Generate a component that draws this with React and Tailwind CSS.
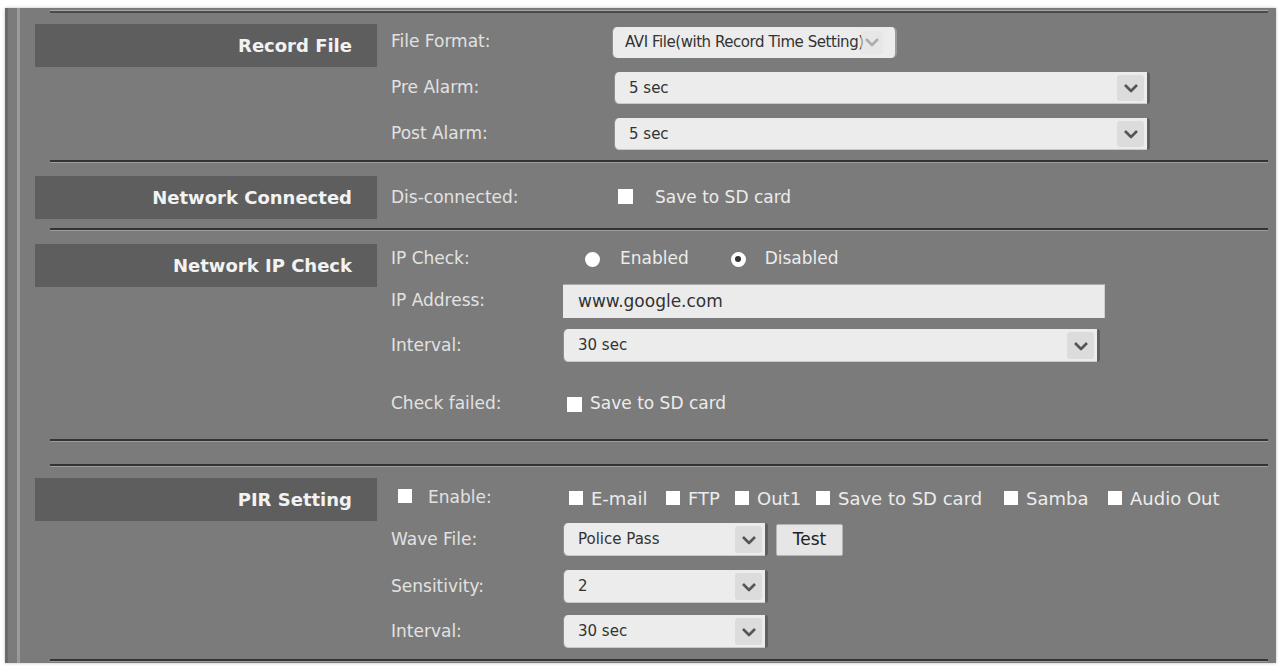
import React from 'react';

const Chevron = ({ faint }) => (
  <svg width="16" height="10" viewBox="0 0 16 10" className={faint ? 'opacity-40' : ''}>
    <polyline points="2,2 8,8 14,2" fill="none" stroke="#555" strokeWidth="2.6" strokeLinejoin="round" />
  </svg>
);

const Select = ({ value, className }) => (
  <div className={`relative flex items-center bg-[#ececec] rounded-l-[5px] rounded-r-[3px] border-l border-l-[#8f8f8f] border-r-[3px] border-r-[#5f5f5f] shadow-[inset_0_-1px_0_#c9c9c9] ${className}`}>
    <span className="pl-[14px] text-[15px] text-[#333]">{value}</span>
    <div className="absolute right-[3px] top-[3px] bottom-[3px] w-[27px] bg-[#dcdcdc] rounded-[3px] flex items-center justify-center">
      <Chevron />
    </div>
  </div>
);

const Box = ({ className = '' }) => (
  <span className={`inline-block w-[14px] h-[14px] bg-white shrink-0 ${className}`}></span>
);

const Divider = ({ className = '' }) => (
  <div className={`ml-[30px] mr-[8px] h-[3px] border-t-2 border-b border-t-[#333] border-b-[#9c9c9c] ${className}`} />
);

const SectionTitle = ({ children }) => (
  <div className="ml-[15px] w-[342px] h-[43px] bg-[#5e5e5e] flex items-center justify-end pr-[25px] text-[18px] font-bold text-[#f2f2f2] shrink-0">
    {children}
  </div>
);

const Label = ({ children, w }) => (
  <div className={`text-[17px] text-[#e2e2e2] shrink-0 ${w}`}>{children}</div>
);

const Option = ({ children, w }) => (
  <div className={`flex items-center gap-[8px] shrink-0 ${w}`}>
    <Box className="w-[13px] h-[13px]" />
    <span>{children}</span>
  </div>
);

export default function App() {
  return (
    <div className="w-[1285px] h-[670px] bg-white pt-[8px] pl-[5px]" style={{ fontFamily: '"DejaVu Sans", Verdana, sans-serif' }}>
      <div className="w-[1271px] h-[655px] bg-[#7b7b7b] flex border-l-[3px] border-l-[#6a6a6a] shadow-[0_0_3px_#bbb]">
        <div className="w-[9px] shrink-0"></div>
        <div className="w-[3px] bg-[#9a9a9a] shrink-0"></div>
        <div className="flex-1 flex flex-col">
          {/* top line */}
          <div className="mt-[2px] ml-[30px] mr-[8px] h-[3px] border-t border-b-2 border-t-[#a6a6a6] border-b-[#4a4a4a]" />

          {/* Record File */}
          <div className="flex items-start mt-[11px]">
            <SectionTitle>Record File</SectionTitle>
            <div className="ml-[14px] flex flex-col gap-[10px]">
              <div className="h-[36px] flex items-center">
                <Label w="w-[221px]">File Format:</Label>
                <div className="relative flex items-center h-[31px] w-[285px] bg-[#ececec] rounded-[5px] border-l border-l-[#8f8f8f] border-r-2 border-r-[#9a9a9a] overflow-hidden">
                  <span className="pl-[12px] text-[15px] tracking-[-0.45px] text-[#333] whitespace-nowrap">AVI File(with Record Time Setting)</span>
                  <div className="absolute right-[12px] top-[4px] bottom-[4px] w-[22px] flex items-center justify-center bg-[#e4e4e4]/60">
                    <Chevron faint />
                  </div>
                </div>
              </div>
              <div className="h-[36px] flex items-center">
                <Label w="w-[223px]">Pre Alarm:</Label>
                <Select value="5 sec" className="h-[32px] w-[536px]" />
              </div>
              <div className="h-[36px] flex items-center">
                <Label w="w-[223px]">Post Alarm:</Label>
                <Select value="5 sec" className="h-[32px] w-[536px]" />
              </div>
            </div>
          </div>

          <Divider className="mt-[8px]" />

          {/* Network Connected */}
          <div className="flex items-start mt-[13px]">
            <SectionTitle>Network Connected</SectionTitle>
            <div className="ml-[14px] h-[43px] flex items-center">
              <Label w="w-[227px]">Dis-connected:</Label>
              <Box className="w-[15px] h-[15px] -mt-[3px]" />
              <span className="ml-[22px] text-[17px] text-[#ececec]">Save to SD card</span>
            </div>
          </div>

          <Divider className="mt-[9px]" />

          {/* Network IP Check */}
          <div className="flex items-start mt-[13px]">
            <SectionTitle>Network IP Check</SectionTitle>
            <div className="ml-[14px] flex flex-col">
              <div className="h-[30px] flex items-center">
                <Label w="w-[194px]">IP Check:</Label>
                <span className="w-[15px] h-[15px] rounded-full bg-white shrink-0"></span>
                <span className="ml-[20px] text-[17px] text-[#ececec]">Enabled</span>
                <span className="ml-[42px] w-[15px] h-[15px] rounded-full bg-white shrink-0 flex items-center justify-center">
                  <span className="w-[6px] h-[6px] rounded-full bg-[#333]"></span>
                </span>
                <span className="ml-[19px] text-[17px] text-[#ececec]">Disabled</span>
              </div>
              <div className="h-[34px] mt-[10px] flex items-center">
                <Label w="w-[172px]">IP Address:</Label>
                <div className="h-[34px] w-[542px] bg-[#ebebeb] border-t border-t-[#a9a9a9] border-r border-r-[#cfcfcf] flex items-center pl-[15px] text-[17px] text-[#333]">
                  www.google.com
                </div>
              </div>
              <div className="h-[33px] mt-[11px] flex items-center">
                <Label w="w-[172px]">Interval:</Label>
                <Select value="30 sec" className="h-[33px] w-[537px]" />
              </div>
              <div className="h-[30px] mt-[27px] flex items-center">
                <Label w="w-[176px]">Check failed:</Label>
                <Box className="w-[15px] h-[15px]" />
                <span className="ml-[8px] text-[17px] text-[#ececec]">Save to SD card</span>
              </div>
            </div>
          </div>

          <Divider className="mt-[20px]" />
          <Divider className="mt-[22px]" />

          {/* PIR Setting */}
          <div className="flex items-start mt-[11px]">
            <SectionTitle>PIR Setting</SectionTitle>
            <div className="ml-[14px] flex flex-col">
              <div className="h-[40px] flex items-center">
                <div className="w-[178px] flex items-center shrink-0">
                  <Box className="ml-[7px] w-[13px] h-[13px] -mt-[4px]" />
                  <span className="ml-[16px] text-[17px] text-[#e2e2e2]">Enable:</span>
                </div>
                <div className="flex items-center text-[18px] text-[#ececec]">
                  <Option w="w-[97px]">E-mail</Option>
                  <Option w="w-[69px]">FTP</Option>
                  <Option w="w-[81px]">Out1</Option>
                  <Option w="w-[188px]">Save to SD card</Option>
                  <Option w="w-[104px]">Samba</Option>
                  <Option>Audio Out</Option>
                </div>
              </div>
              <div className="h-[33px] mt-[5px] flex items-center">
                <Label w="w-[172px]">Wave File:</Label>
                <Select value="Police Pass" className="h-[33px] w-[205px]" />
                <button className="ml-[8px] h-[32px] w-[67px] bg-[#e6e6e6] border border-[#b5b5b5] rounded-[2px] text-[17px] text-[#222]">Test</button>
              </div>
              <div className="h-[33px] mt-[14px] flex items-center">
                <Label w="w-[172px]">Sensitivity:</Label>
                <Select value="2" className="h-[33px] w-[205px]" />
              </div>
              <div className="h-[33px] mt-[12px] flex items-center">
                <Label w="w-[172px]">Interval:</Label>
                <Select value="30 sec" className="h-[33px] w-[205px]" />
              </div>
            </div>
          </div>

          <Divider className="mt-[11px]" />
        </div>
      </div>
    </div>
  );
}
